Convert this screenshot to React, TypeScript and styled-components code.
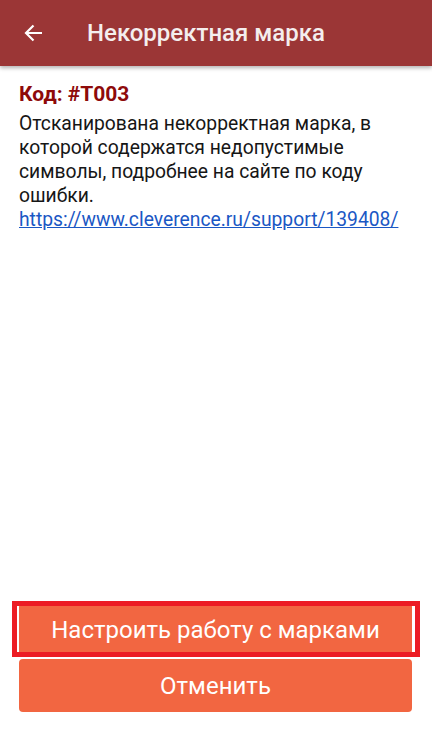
import React from "react";
import styled, {createGlobalStyle} from "styled-components";

const GlobalStyle = createGlobalStyle`
  html, body {
    margin: 0;
    padding: 0;
    background: #ffffff;
  }
  body {
    font-family: Roboto, "Noto Sans", "Liberation Sans", sans-serif;
  }
`;

const BackIcon: React.FC = () => (
    <svg width="24" height="24" viewBox="0 0 24 24" fill="none">
        <path d="M20 12H4.5M11.5 4.5L4 12l7.5 7.5" stroke="#ffffff" strokeWidth="2.2"/>
    </svg>
);

const App: React.FC = () => {
    return (
        <Page>
            <GlobalStyle/>
            <Header>
                <BackButton><BackIcon/></BackButton>
                <Title>Некорректная марка</Title>
            </Header>
            <Content>
                <Code>Код: #T003</Code>
                <Message>
                    Отсканирована некорректная марка, в которой содержатся недопустимые символы, подробнее на сайте по коду ошибки.
                </Message>
                <Link href="#">https://www.cleverence.ru/support/139408/</Link>
            </Content>
            <Actions>
                <Highlighted>
                    <ActionButton>Настроить работу с марками</ActionButton>
                    <HighlightFrame/>
                </Highlighted>
                <ActionButton>Отменить</ActionButton>
            </Actions>
        </Page>
    );
}

export default App;

const Page = styled.div`
  display: flex;
  flex-direction: column;
  width: 432px;
  height: 739px;
  overflow: hidden;
`;

const Header = styled.header`
  display: flex;
  align-items: center;
  height: 66px;
  flex-shrink: 0;
  background: #9b3636;
  box-shadow: 0 2px 4px rgba(0, 0, 0, 0.3);
  position: relative;
  z-index: 1;
`;

const BackButton = styled.div`
  display: flex;
  align-items: center;
  justify-content: center;
  width: 24px;
  height: 24px;
  margin-left: 22px;
  margin-right: 41px;
`;

const Title = styled.h1`
  margin: 0;
  color: #f4eeee;
  font-size: 24px;
  font-weight: 500;
`;

const Content = styled.main`
  flex: 1;
  padding: 15px 36px 0 19px;
  font-size: 19.3px;
  line-height: 24px;
`;

const Code = styled.div`
  color: #8e0a0a;
  font-size: 21px;
  font-weight: 700;
  line-height: 26px;
  margin-bottom: 5px;
`;

const Message = styled.p`
  margin: 0;
  color: #161616;
`;

const Link = styled.a`
  color: #1a57c4;
  text-decoration: underline;
  white-space: nowrap;
`;

const Actions = styled.div`
  display: flex;
  flex-direction: column;
  gap: 3px;
  padding: 0 20px 27px 19px;
`;

const Highlighted = styled.div`
  position: relative;
  display: flex;
  flex-direction: column;
`;

const HighlightFrame = styled.div`
  position: absolute;
  top: -2px;
  bottom: -1px;
  left: -7px;
  right: -8px;
  border: 5px solid #ec1c24;
  pointer-events: none;
`;

const ActionButton = styled.button`
  height: 53px;
  border: none;
  border-radius: 4px;
  background: #f26641;
  color: #ffffff;
  font-family: Roboto, "Noto Sans", "Liberation Sans", sans-serif;
  font-size: 24px;
  padding: 0;
`;
